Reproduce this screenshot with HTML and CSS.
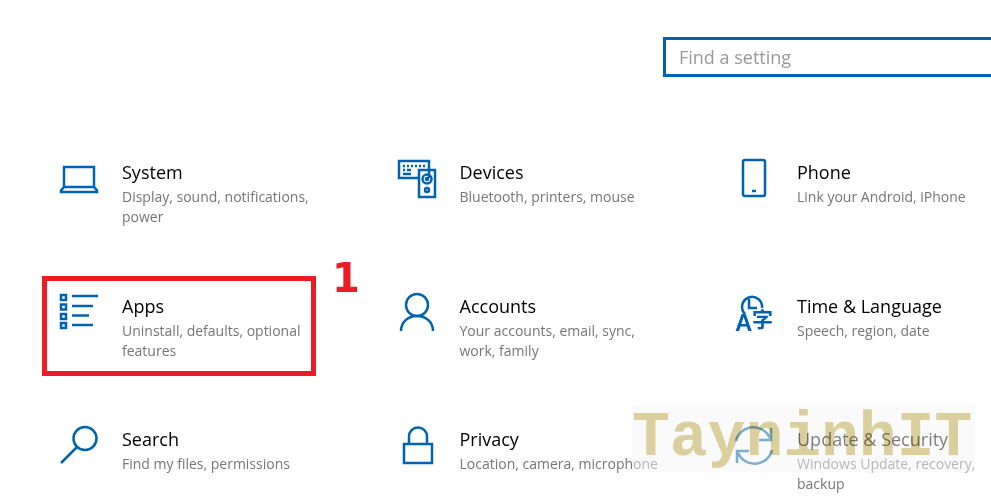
FILE: index.html
```html
<!DOCTYPE html>
<html lang="en">
<head>
    <meta charset="UTF-8">
    <meta name="viewport" content="width=device-width, initial-scale=1.0">
    <title>Windows Settings</title>
    <link rel="stylesheet" href="styles.css">
</head>
<body>
    <div class="page">
        <div class="search-row">
            <div class="search-box">Find a setting</div>
        </div>

        <div class="tiles">
            <div class="tile">
                <svg class="icon" viewBox="0 0 40 40"><path d="M4 27V7h30v20M1 32h36v-1.500l-3-3.500H4l-3 3.500z"/></svg>
                <div class="tile-text">
                    <div class="tile-title">System</div>
                    <div class="tile-desc">Display, sound, notifications, power</div>
                </div>
            </div>
            <div class="tile">
                <svg class="icon" viewBox="0 0 40 40"><path d="M31 18V1H1v17h19M5 6h2M9 6h2M13 6h2M17 6h2M21 6h2M25 6h2M5 10h2M9 10h4M5 14h8"/><path d="M21 10h16v27H21z"/><circle cx="29" cy="19" r="4.500"/><circle cx="29" cy="19" r="1"/><circle cx="29" cy="30" r="2"/></svg>
                <div class="tile-text">
                    <div class="tile-title">Devices</div>
                    <div class="tile-desc">Bluetooth, printers, mouse</div>
                </div>
            </div>
            <div class="tile">
                <svg class="icon" viewBox="0 0 40 40"><rect x="8" y="0" width="22" height="36" rx="2"/><path d="M17 31h4" stroke-width="2.500"/></svg>
                <div class="tile-text">
                    <div class="tile-title">Phone</div>
                    <div class="tile-desc">Link your Android, iPhone</div>
                </div>
            </div>

            <div class="tile tile-marked">
                <svg class="icon" viewBox="0 0 40 40"><path d="M1 1h5v5H1zM1 10.500h5v5H1zM1 20h5v5H1zM1 29h5v5H1z"/><path d="M12 2h26M12 12h21M12 21.500h17M12 31h21"/></svg>
                <div class="tile-text">
                    <div class="tile-title">Apps</div>
                    <div class="tile-desc">Uninstall, defaults, optional features</div>
                </div>
                <div class="red-frame"></div>
                <div class="red-number">1</div>
            </div>
            <div class="tile">
                <svg class="icon" viewBox="0 0 40 40"><circle cx="19" cy="11" r="11"/><path d="M3 37c0-9 7-15 16-15s16 6 16 15"/></svg>
                <div class="tile-text">
                    <div class="tile-title">Accounts</div>
                    <div class="tile-desc">Your accounts, email, sync, work, family</div>
                </div>
            </div>
            <div class="tile">
                <svg class="icon" viewBox="0 0 40 40">
                    <path d="M10 20a10 10 0 1 1 17-6M14 5v9h8"/>
                    <text class="icon-a" x="0" y="37">A</text>
                    <text class="icon-zi" x="17" y="33">字</text>
                </svg>
                <div class="tile-text">
                    <div class="tile-title">Time &amp; Language</div>
                    <div class="tile-desc">Speech, region, date</div>
                </div>
            </div>

            <div class="tile">
                <svg class="icon" viewBox="0 0 40 40"><circle cx="25" cy="11.500" r="11.500"/><path d="M17 20L1 36"/></svg>
                <div class="tile-text">
                    <div class="tile-title">Search</div>
                    <div class="tile-desc">Find my files, permissions</div>
                </div>
            </div>
            <div class="tile">
                <svg class="icon lock" viewBox="0 0 40 40"><path d="M6 17h28v19H6zM11 17V9.500a9 9 0 0 1 18 0V17"/></svg>
                <div class="tile-text">
                    <div class="tile-title">Privacy</div>
                    <div class="tile-desc">Location, camera, microphone</div>
                </div>
            </div>
            <div class="tile">
                <svg class="icon" viewBox="0 0 40 40"><path d="M1 14a18 18 0 0 1 34-3M37 23a18 18 0 0 1-34 3M36 1v12H24M2 36V24h12"/></svg>
                <div class="tile-text">
                    <div class="tile-title">Update &amp; Security</div>
                    <div class="tile-desc">Windows Update, recovery, backup</div>
                </div>
            </div>
        </div>

        <div class="watermark"><span>TayninhIT</span></div>
    </div>
</body>
</html>
```

FILE: styles.css
```css
html, body {
    margin: 0;
    padding: 0;
    height: 100%;
    background-color: #fff;
    overflow: hidden;
}

.page {
    position: relative;
    height: 499px;
    overflow: hidden;
    font-family: "Open Sans", "Liberation Sans", sans-serif;
}

.search-row {
    display: flex;
    padding-top: 37px;
    padding-left: 663px;
}

.search-box {
    flex: none;
    box-sizing: border-box;
    width: 340px;
    height: 40px;
    border: 3px solid #0063b1;
    padding-left: 13px;
    font-size: 18px;
    line-height: 34px;
    color: #999;
}

.tiles {
    display: grid;
    grid-template-columns: repeat(3, 337.5px);
    grid-auto-rows: 133.5px;
    padding-top: 83px;
    padding-left: 60px;
}

.tile {
    position: relative;
    display: flex;
    gap: 22px;
}

.icon {
    flex: none;
    width: 40px;
    height: 40px;
    overflow: visible;
    fill: none;
    stroke: #0063b1;
    stroke-width: 2.500;
}

.icon-a {
    font-family: "Liberation Sans", sans-serif;
    font-size: 24px;
    font-weight: bold;
    fill: #0063b1;
    stroke: none;
}

.icon-zi {
    font-family: "Noto Sans CJK SC", sans-serif;
    font-size: 21px;
    font-weight: bold;
    fill: #0063b1;
    stroke: none;
}

.tile-text {
    width: 205px;
}

.tile-title {
    font-size: 18px;
    line-height: 24px;
    color: #000;
}

.tile-desc {
    margin-top: 3px;
    font-size: 14px;
    line-height: 20px;
    color: #767676;
}

.red-frame {
    position: absolute;
    left: -18px;
    top: -18px;
    box-sizing: border-box;
    width: 274px;
    height: 100px;
    border: 5px solid #ed1c24;
}

.red-number {
    position: absolute;
    left: 272px;
    top: -40px;
    font-family: "DejaVu Sans", sans-serif;
    font-size: 40px;
    font-weight: bold;
    line-height: 48px;
    color: #ed1c24;
}

/* lies over the bottom right tile */
.watermark {
    position: absolute;
    left: 632px;
    top: 405px;
    width: 343px;
    height: 68px;
    overflow: hidden;
    background-color: rgba(246, 246, 246, 0.5);
}

.watermark span {
    display: block;
    font-family: "Liberation Mono", monospace;
    font-size: 63px;
    font-weight: bold;
    line-height: 68px;
    color: #e0d4a0;
    mix-blend-mode: multiply;
}
```
